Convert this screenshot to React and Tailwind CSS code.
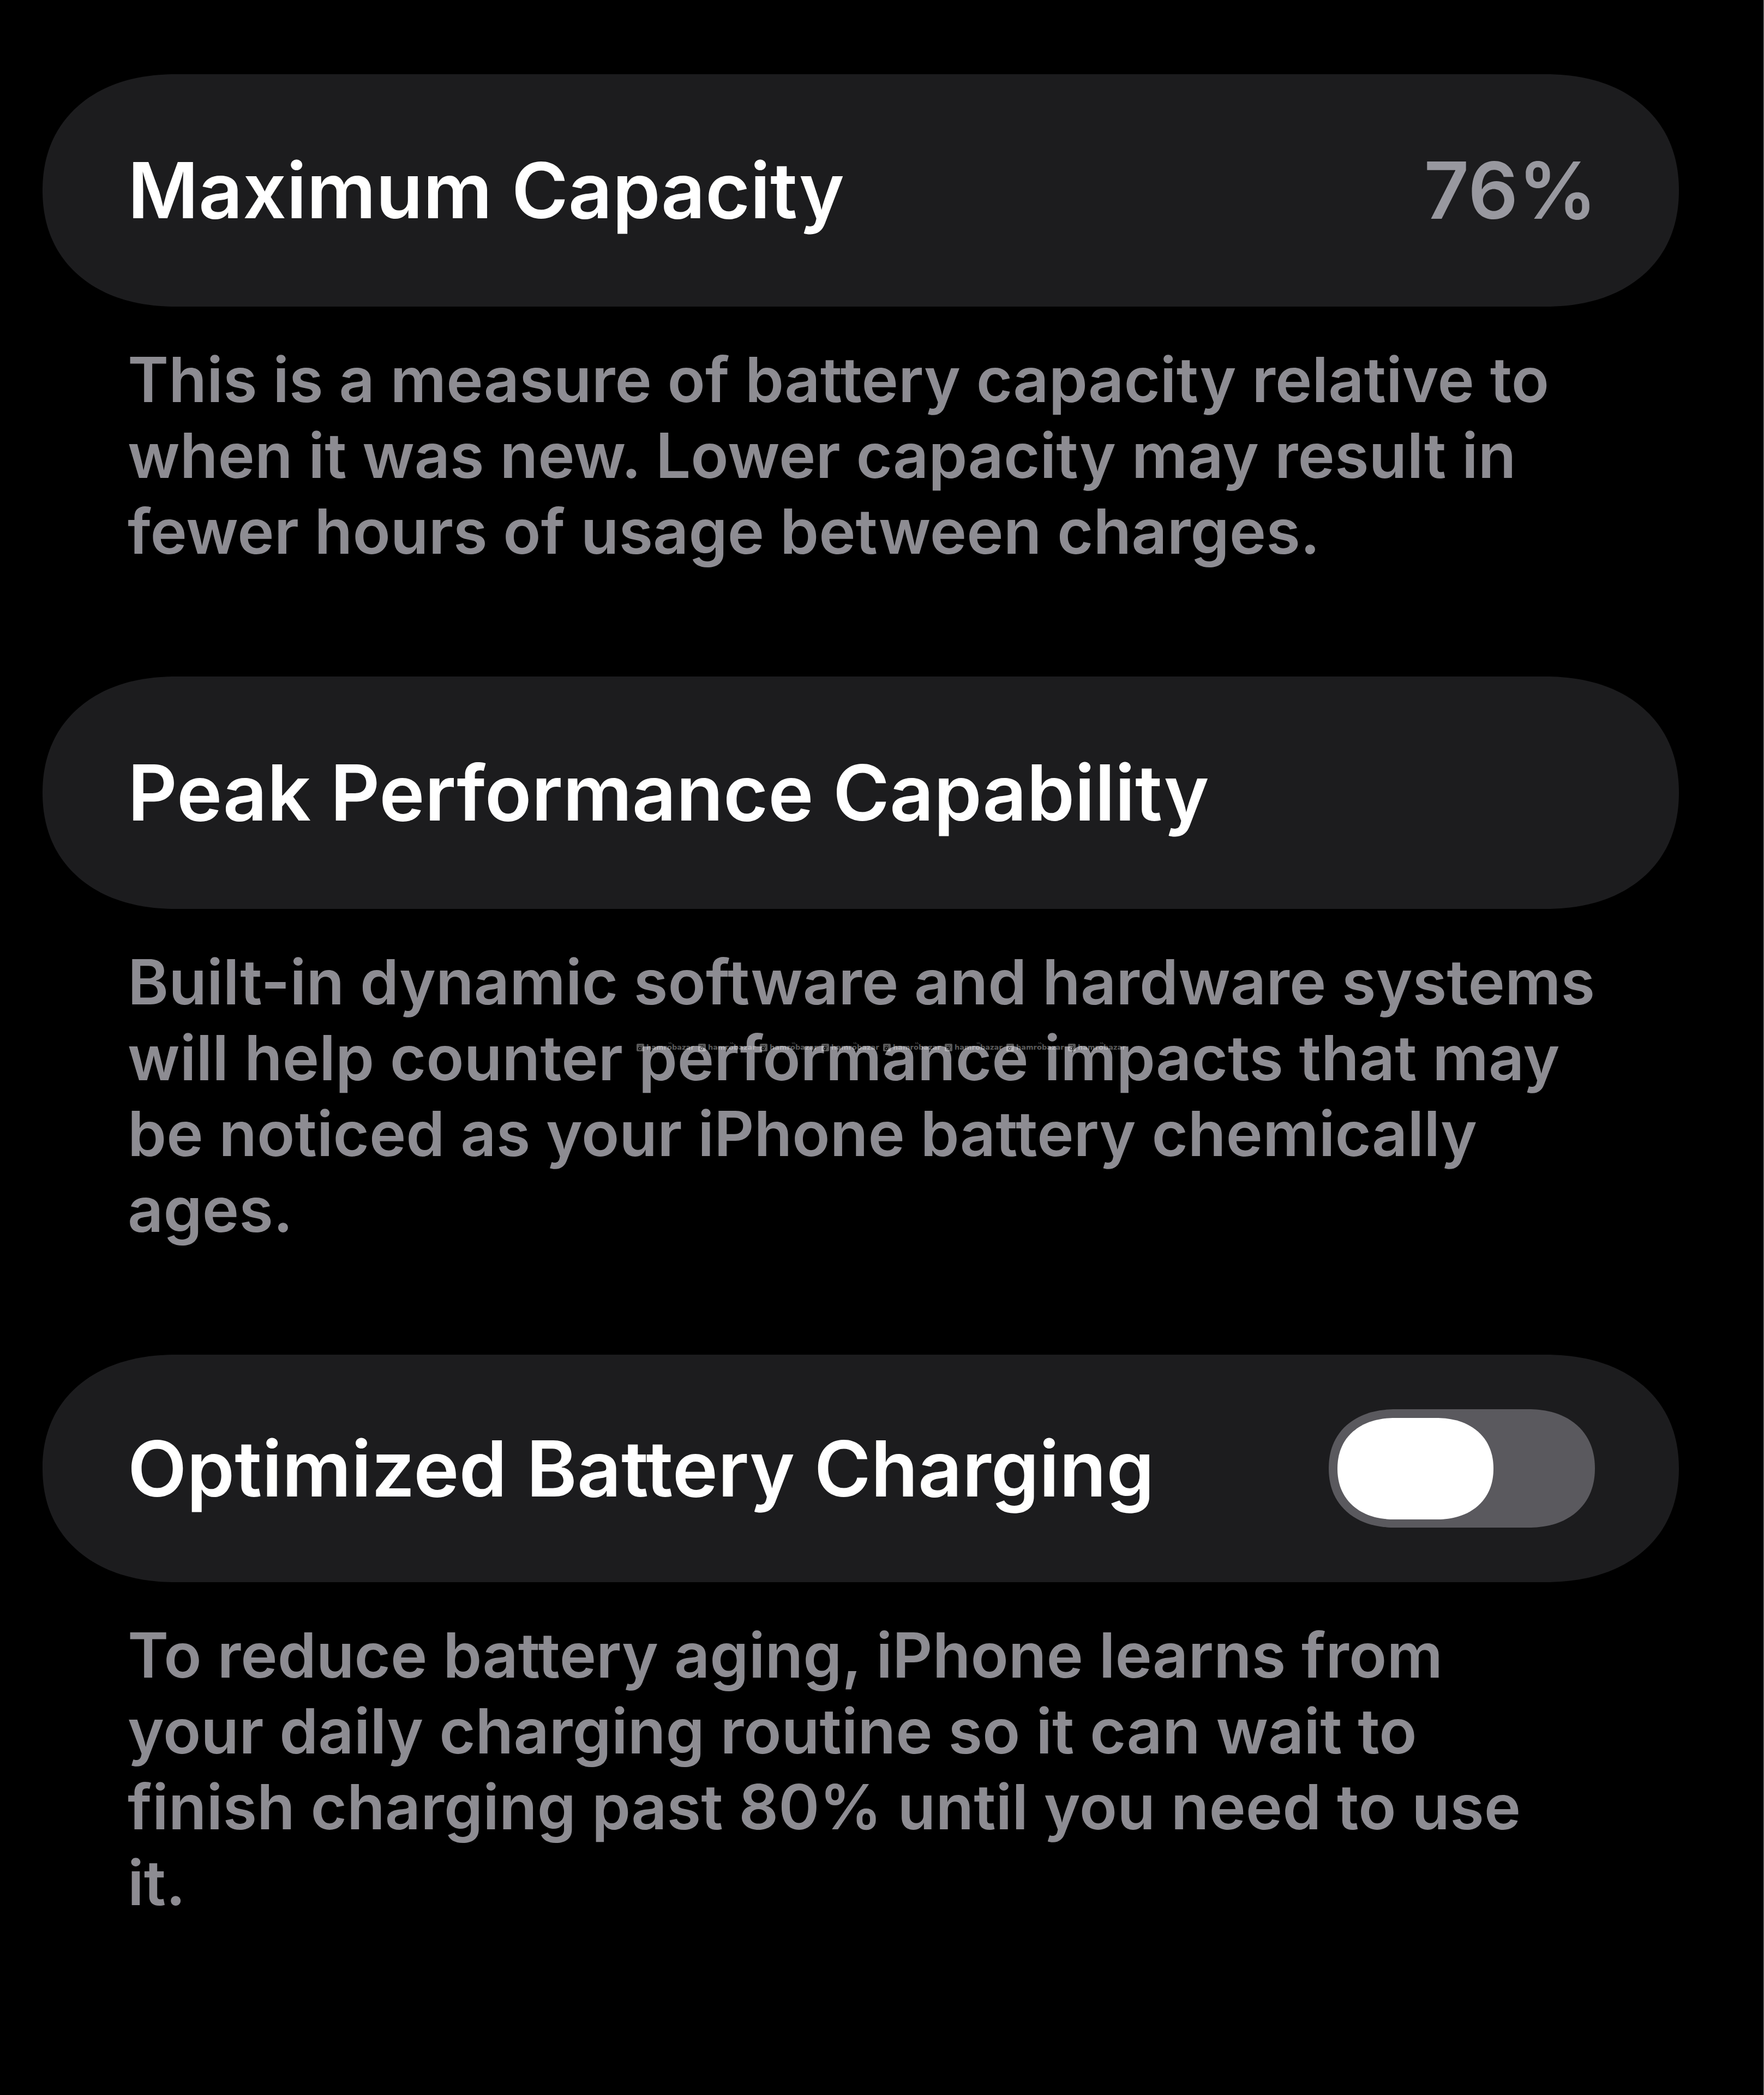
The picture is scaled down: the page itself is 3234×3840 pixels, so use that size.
import React, { useState } from "react";

function Card({ compact = false, children }) {
  return (
    <div
      className={`flex items-center justify-between rounded-[245px/50%] bg-[#1c1c1e] pr-[150px] pl-[156px] [corner-shape:superellipse(1.14)] ${
        compact ? "h-[417px]" : "h-[426px]"
      }`}
    >
      {children}
    </div>
  );
}

function Note({ children }) {
  return (
    <p className="pt-16 pl-[156px] text-[114px] leading-[139px] font-semibold text-[#8d8c92]">
      {children}
    </p>
  );
}

function Mark() {
  return (
    <span className="flex w-[113px] shrink-0 items-center gap-1">
      <svg viewBox="0 0 14 14" className="size-[14px] shrink-0" aria-hidden="true">
        <rect width="14" height="14" rx="2" fill="#ffffff" />
        <circle cx="6" cy="9" r="2.2" fill="none" stroke="#000" strokeWidth="1.4" />
        <path d="M5.500 5L5 3M7.500 5L8.500 2.500M9 7l2-1.500" stroke="#000" strokeWidth="1" />
      </svg>
      <span className="relative font-['DejaVu_Sans',sans-serif] text-[13px] leading-[14px] font-bold text-white">
        hamrobazar
        <svg viewBox="0 0 8 5" className="absolute -top-1 left-[40px] h-[5px] w-2" aria-hidden="true">
          <path d="M2 4.500L1.500 1.500M4 4.500L5 1M5.500 5L7.500 3" stroke="#fff" strokeWidth="1" />
        </svg>
      </span>
    </span>
  );
}

export default function App() {
  const [on, setOn] = useState(false);
  return (
    <main className="min-h-screen border-r border-[#8a8a88] bg-black pt-[136px] pr-[155px] pl-[78px] font-['Inter',sans-serif]">
      <section>
        <Card>
          <h2 className="text-[141px] font-semibold text-white">Maximum Capacity</h2>
          <span className="text-[144px] font-semibold text-[#98989f]">76%</span>
        </Card>
        <Note>
          This is a measure of battery capacity relative to<br />
          when it was new. Lower capacity may result in<br />
          fewer hours of usage between charges.
        </Note>
      </section>
      <section className="mt-[197px]">
        <Card>
          <h2 className="text-[141px] font-semibold text-white">Peak Performance Capability</h2>
        </Card>
        <div className="relative">
          <Note>
            Built-in dynamic software and hardware systems<br />
            will help counter performance impacts that may<br />
            be noticed as your iPhone battery chemically<br />
            ages.
          </Note>
          <div className="absolute top-[247px] left-[1089px] flex opacity-35">
            {Array.from({ length: 8 }, (_, i) => (
              <Mark key={i} />
            ))}
          </div>
        </div>
      </section>
      <section className="mt-[197px]">
        <Card compact>
          <label htmlFor="optimized-charging" className="text-[141px] font-semibold text-white">
            Optimized Battery Charging
          </label>
          <input
            id="optimized-charging"
            type="checkbox"
            role="switch"
            checked={on}
            onChange={() => setOn(!on)}
            className="mr-1 flex h-[217px] w-[488px] shrink-0 cursor-pointer appearance-none items-center rounded-[122px/50%] bg-[#5a595e] px-4 [corner-shape:superellipse(1.14)] before:block before:h-[186px] before:w-[286px] before:rounded-[105px/50%] before:bg-white before:[corner-shape:superellipse(1.14)] checked:justify-end checked:bg-[#30d158]"
          />
        </Card>
        <Note>
          To reduce battery aging, iPhone learns from<br />
          your daily charging routine so it can wait to<br />
          finish charging past 80% until you need to use<br />
          it.
        </Note>
      </section>
    </main>
  );
}
